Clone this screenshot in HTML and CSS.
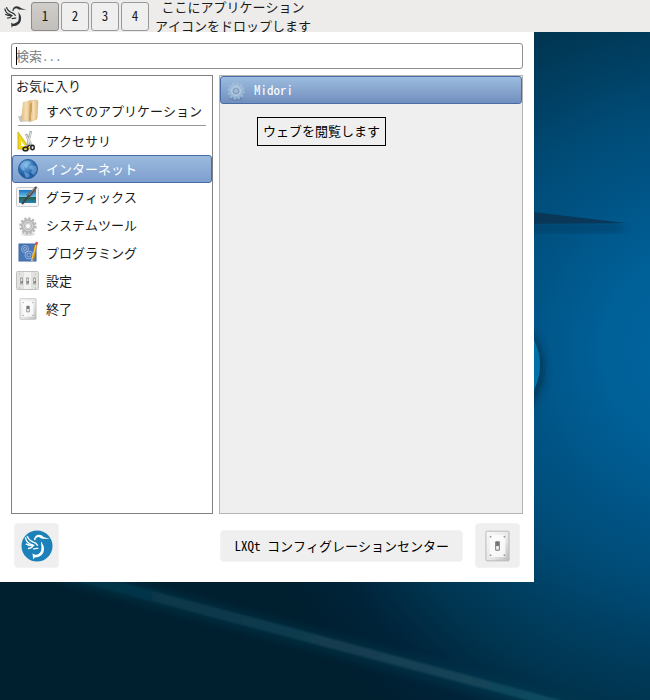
FILE: index.html
```
<!DOCTYPE html>
<html lang="ja">
<head>
<meta charset="utf-8">
<meta name="viewport" content="width=device-width, initial-scale=1">
<title>LXQt</title>
<link rel="stylesheet" href="styles.css">
</head>
<body>
<svg class="defs" aria-hidden="true">
  <defs>
    <linearGradient id="plate" x2="1" y2="1"><stop offset="0" stop-color="#fafafa"/><stop offset=".6" stop-color="#e5e5e5"/><stop offset="1" stop-color="#bbb"/></linearGradient>
    <linearGradient id="folder" x2="1" y2="0"><stop offset="0" stop-color="#dfb878"/><stop offset=".5" stop-color="#f5dfb5"/><stop offset="1" stop-color="#e0b878"/></linearGradient>
    <linearGradient id="sky" x2="0" y2="1"><stop offset="0" stop-color="#1673c0"/><stop offset=".5" stop-color="#69bdeb"/><stop offset=".56" stop-color="#266147"/><stop offset="1" stop-color="#2385b9"/></linearGradient>
    <radialGradient id="ball" cx=".4" cy=".3"><stop offset="0" stop-color="#78b3e4"/><stop offset="1" stop-color="#1f5fa6"/></radialGradient>
    <symbol id="bird" viewBox="62 87 92 92">
      <path d="M99 115Q102 101 114 101Q122 101 127 107L145 113L127 112Q122 113 118 110Q112 105 107 109Q103 111 103 117Z"/>
      <path d="M119 119Q129 132 128 143Q127 157 115 163Q108 166 101 166L97 172L95 154Q99 159 106 158Q117 156 120 146Q122 136 119 119Z"/>
      <path d="M75 108Q75 120 88 127L100 132M80 104Q83 116 96 121Q106 124 110 132M76 127Q86 133 99 132M82 140Q92 140 96 134M97 142Q105 139 112 140" fill="none" stroke="currentColor" stroke-width="4"/>
    </symbol>
    <symbol id="gear" viewBox="0 0 22 22">
      <ellipse cx="11" cy="20" rx="7" ry="2" fill="#000" opacity=".12"/>
      <circle cx="11" cy="12" r="7.500" fill="none" stroke="currentColor" stroke-width="2.500" stroke-dasharray="2.300 1.627"/>
      <circle cx="11" cy="12" r="5" fill="none" stroke="currentColor" stroke-width="4"/>
      <circle cx="11" cy="12" r="4.500" fill="none" stroke="#fff" stroke-opacity=".45"/>
      <circle cx="11" cy="12" r="2.500" fill="#fff" fill-opacity=".35" stroke="#555" stroke-opacity=".3"/>
    </symbol>
    <symbol id="switch" viewBox="2 0 27 34">
      <rect x="3" y="1" width="25" height="32" rx="1" fill="url(#plate)" stroke="#b5b5b5"/>
      <rect x="7" y="5" width="17" height="24" fill="#fff" fill-opacity=".75"/>
      <g fill="#999"><circle cx="8" cy="7" r="1"/><circle cx="23" cy="7" r="1"/><circle cx="8" cy="27" r="1"/><circle cx="23" cy="27" r="1"/></g>
      <rect x="13" y="12" width="5" height="10" rx="1" fill="#777"/><path d="M14 17h3v4h-3z" fill="#eee"/>
    </symbol>
  </defs>
</svg>

<svg class="wallpaper" viewBox="0 0 650 700" preserveAspectRatio="xMidYMid slice" aria-hidden="true">
  <defs>
    <radialGradient id="glow" gradientUnits="userSpaceOnUse" cx="700" cy="350" r="480">
      <stop offset="0" stop-color="#00659f"/><stop offset=".2" stop-color="#006098"/><stop offset=".35" stop-color="#005587"/><stop offset=".5" stop-color="#004b76"/><stop offset=".62" stop-color="#003f62"/><stop offset=".74" stop-color="#003550"/><stop offset=".88" stop-color="#002339"/><stop offset="1" stop-color="#001f2f"/>
    </radialGradient>
    <linearGradient id="ray" x2="1" y2="0"><stop offset="0" stop-color="#003345"/><stop offset=".6" stop-color="#173f52"/><stop offset="1" stop-color="#0b4e66"/></linearGradient>
    <filter id="soft" x="-50%" y="-50%" width="200%" height="200%"><feGaussianBlur stdDeviation="4"/></filter>
    <filter id="edge"><feGaussianBlur stdDeviation="1"/></filter>
  </defs>
  <rect width="650" height="700" fill="url(#glow)"/>
  <path d="M60 572L600 716" stroke="#00485c" stroke-width="20" opacity=".3" filter="url(#soft)"/>
  <path d="M52 575L94 575L616 715L584 715Z" fill="url(#ray)" filter="url(#edge)"/>
  <path d="M500 225L624 225L620 231L500 231Z" fill="#003658" opacity=".7" filter="url(#soft)"/>
  <path d="M500 208L625 223L500 224Z" fill="#0a3757"/>
  <circle cx="487" cy="369" r="57" fill="#00304e" opacity=".8" filter="url(#soft)"/>
  <circle cx="485" cy="365" r="55" fill="#0070a8"/>
</svg>

<header class="panel">
  <button class="launcher" aria-label="メニュー"><svg><use href="#bird"/></svg></button>
  <nav class="desktops" aria-label="デスクトップ">
    <button class="desktop current">1</button><button class="desktop">2</button><button class="desktop">3</button><button class="desktop">4</button>
  </nav>
  <p class="drop">ここにアプリケーション<br>アイコンをドロップします</p>
</header>

<main class="menu">
  <div class="search"><input type="text" placeholder="検索..." aria-label="検索"></div>
  <div class="lists">
    <nav class="categories" aria-label="カテゴリ">
      <button class="favorites">お気に入り</button>
      <button class="row">
        <svg viewBox="0 0 22 22"><path d="M1 16Q4 17 5 14L9 12L13 21L3 22Z" fill="#c4c4c4"/><path d="M6 2L14 0V20L4 21Z" fill="url(#folder)"/><path d="M13 1L19 0Q21 0 21 2L20 19L12 22Z" fill="url(#folder)" stroke="#d3ab6c" stroke-width=".500"/><path d="M13 4L15 2V11L14 14V21L12 20Z" fill="#cda05c"/></svg>
        すべてのアプリケーション</button>
      <hr>
      <button class="row">
        <svg viewBox="0 0 22 22"><path d="M1 2L13 19H1Z" fill="#f1d51f" stroke="#d6b70d"/><path d="M4 11L8 16H4Z" fill="#fff"/><path d="M14 1L10 17M9 4L15 17" stroke="#aaa" stroke-width="2.500"/><path d="M14 2L11 14M9 5L14 14" stroke="#e6e6e6"/><g fill="none" stroke="#222" stroke-width="1.500"><ellipse cx="8.500" cy="19" rx="2.500" ry="1.800"/><ellipse cx="15.500" cy="17.500" rx="1.700" ry="2.200"/></g><path d="M10 17l3-2" stroke="#222" stroke-width="1.500"/></svg>
        アクセサリ</button>
      <button class="row selected" aria-current="true">
        <svg viewBox="0 0 22 22"><circle cx="11" cy="11" r="9.500" fill="url(#ball)" stroke="#2b5f9f"/><path d="M4 6L8 3L12 3L14 5L11 7L10 10L7 9L8 13L5 12L3 9ZM14 7L19 8L20 12L17 17L14 15L15 12L12 10ZM7 14L11 15L13 18L10 20L8 18Z" fill="#9dcbf0" opacity=".45"/></svg>
        インターネット</button>
      <button class="row">
        <svg viewBox="0 0 22 22"><rect x="-.500" y="1.500" width="22" height="19" rx="1" fill="#f5f5f5" stroke="#ccc"/><rect x="2" y="4" width="17" height="13" fill="url(#sky)"/><path d="M20 0Q20 5 12 12L9 9Z" fill="#707070"/><path d="M19 1L11 11L5 18" stroke="#444" stroke-width="2" fill="none"/><path d="M18 2L12 9" stroke="#bbb" stroke-width=".700"/></svg>
        グラフィックス</button>
      <button class="row gray"><svg><use href="#gear"/></svg>システムツール</button>
      <button class="row">
        <svg viewBox="0 0 22 22"><rect x="2" y="2" width="17" height="17" fill="#4a78b6" stroke="#3c69a6"/><g fill="none" stroke="#b3cae8" stroke-width=".700"><circle cx="8" cy="7" r="3.500"/><circle cx="8" cy="7" r="1.500"/><circle cx="12" cy="13" r="4"/><circle cx="12" cy="13" r="2"/></g><path d="M19 3L16 17" stroke="#d88c15" stroke-width="2.500"/><path d="M19 3L15 17" stroke="#f8d44a"/><path d="M20 0L19 3" stroke="#d65753" stroke-width="2.500"/><path d="M14 17L17 18L14 20Z" fill="#d7b78a"/></svg>
        プログラミング</button>
      <button class="row">
        <svg viewBox="0 0 22 22"><rect x="-.500" y="1.500" width="22" height="18" rx="1" fill="#e2e2df" stroke="#c2c2be"/><path d="M7 2h7v17h-7z" fill="#f1f1ef"/><g fill="#eee" stroke="#aaa"><rect x="3.500" y="8" width="2" height="6"/><rect x="9.500" y="8" width="2" height="6"/><rect x="16.500" y="8" width="2" height="6"/></g><g fill="#888"><path d="M4 11h2v2h-2zM10 11h2v2h-2zM17 11h2v2h-2z"/></g><path d="M2 4h1M18 4h1M2 18h1M18 18h1" stroke="#aaa"/></svg>
        設定</button>
      <button class="row"><svg><use href="#switch"/></svg>終了</button>
    </nav>
    <section class="apps" aria-label="アプリケーション">
      <button class="row selected faded"><svg><use href="#gear"/></svg>Midori</button>
      <div class="tooltip" role="tooltip">ウェブを閲覧します</div>
    </section>
  </div>
  <footer class="actions">
    <button class="square" aria-label="LXQt"><svg class="logo" viewBox="0 0 32 32"><circle cx="16" cy="16" r="15.500" fill="#1b81b8"/><use href="#bird" width="32" height="32"/></svg></button>
    <button class="config">LXQt コンフィグレーションセンター</button>
    <button class="square" aria-label="終了"><svg class="power"><use href="#switch"/></svg></button>
  </footer>
</main>
</body>
</html>
```
FILE: styles.css
```
* { box-sizing: border-box; }

body {
  margin: 0;
  min-height: 100vh;
  display: flex;
  flex-direction: column;
  position: relative;
  overflow: hidden;
  background: #001f2f;
  color: #1a1a1a;
  font: 13px/18px "Noto Sans Mono CJK JP", "Noto Sans CJK JP", sans-serif;
}

button, input { font: inherit; color: inherit; margin: 0; }
button { border: 0; padding: 0; background: none; }

.defs { position: absolute; width: 0; height: 0; }
.wallpaper { position: absolute; inset: 0; width: 100%; height: 100%; z-index: -1; }

.panel {
  display: flex;
  align-items: center;
  height: 32px;
  padding-left: 1px;
  overflow: hidden;
  background: #edecea;
}
.launcher { width: 28px; height: 32px; flex: none; margin-right: 2px; color: #2d3436; }
.launcher svg { display: block; width: 28px; height: 28px; fill: currentColor; }
.desktops { display: flex; gap: 2px; }
.desktop {
  width: 28px;
  height: 29px;
  border: 1px solid #999;
  border-radius: 3px;
  background: #efefef;
}
.desktop.current { background: linear-gradient(#d0cdca, #c3bfbb); border-color: #8c8c8c; }
.drop { margin: 0 0 0 6px; line-height: 19px; text-align: center; white-space: nowrap; }

.menu {
  flex: 1;
  display: flex;
  flex-direction: column;
  gap: 6px;
  width: 100%;
  max-width: 534px;
  margin-bottom: 118px;
  padding: 11px;
  background: #fff;
}

.search { position: relative; display: flex; }
.search::before {
  content: "";
  position: absolute;
  left: 5px;
  top: 4px;
  bottom: 4px;
  width: 1px;
  background: #000;
}
.search input {
  width: 100%;
  height: 26px;
  padding: 0 4px 2px;
  border: 1px solid #8f8f8f;
  border-radius: 3px;
  background: #fff;
}
.search input::placeholder { color: #808080; opacity: 1; }

.lists {
  flex: 1;
  display: grid;
  grid-template-columns: 202px 1fr;
  gap: 6px;
}
.categories { border: 1px solid #808080; background: #fff; }
.apps { position: relative; border: 1px solid #b5b5b5; background: #efefef; }

.favorites { display: block; width: 100%; height: 21px; padding: 0 4px 2px; text-align: left; }
.categories hr { height: 1px; margin: 0 6px 1px; border: 0; background: #999; }

.row {
  display: flex;
  align-items: center;
  gap: 7px;
  width: 100%;
  height: 28px;
  padding: 0 5px 1px;
  white-space: nowrap;
}
.row svg { width: 22px; height: 22px; flex: none; overflow: visible; }
.row.selected {
  color: #fff;
  border: 1px solid #486da5;
  border-radius: 3px;
  background: linear-gradient(#9bbadd, #7f9fcf);
  padding: 0 4px 1px;
}
.row.gray svg { color: #b8b8b8; }
.apps .row.selected { background: linear-gradient(#9dbce0, #718fbd); }
.row.faded svg { color: #a5c4dc; opacity: .7; }

.tooltip {
  position: absolute;
  left: 37px;
  top: 41px;
  padding: 4px 5px 5px;
  border: 1px solid #000;
  background: #efefef;
  color: #000;
  white-space: nowrap;
}

.actions { display: flex; align-items: center; padding: 3px; }
.square, .config {
  border: 1px solid #f3f3f3;
  border-radius: 4px;
  background: #efefef;
  color: #000;
}
.square { display: grid; place-items: center; width: 45px; height: 45px; }
.config { margin-left: auto; margin-right: 12px; padding: 6px 13px; }
.logo { width: 32px; height: 32px; color: #fff; fill: currentColor; }
.power { width: 25px; height: 32px; }
```
